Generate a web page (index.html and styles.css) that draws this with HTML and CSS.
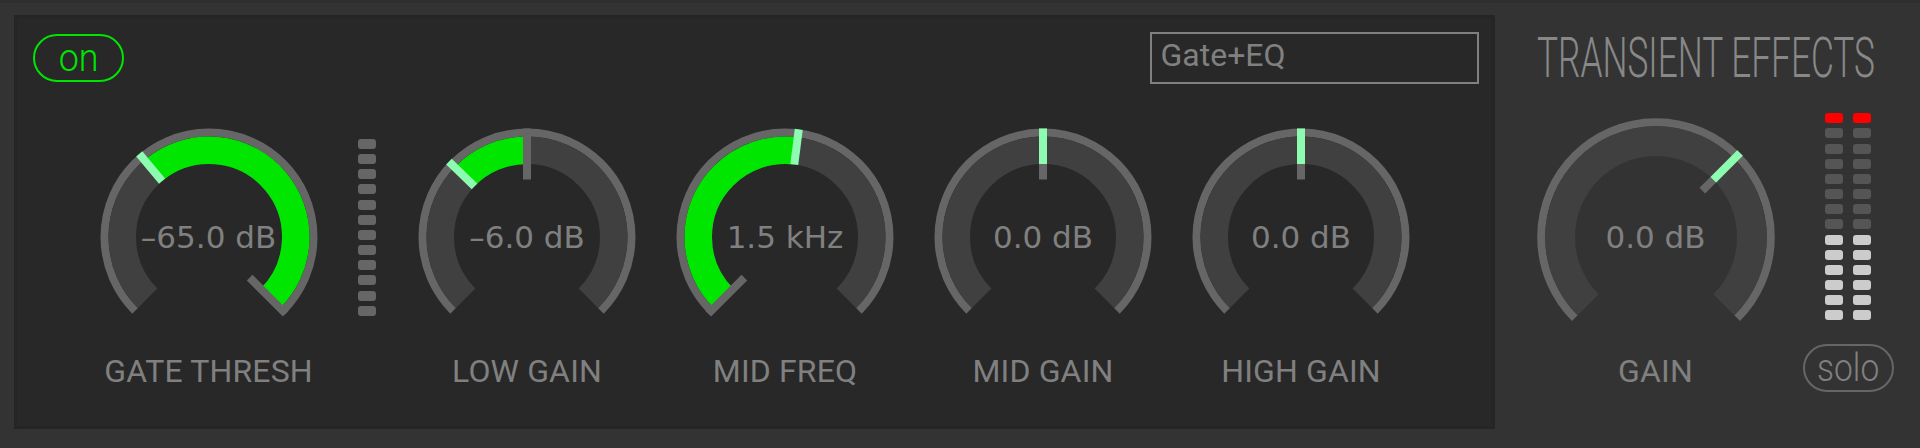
FILE: index.html
```html
<!DOCTYPE html>
<html>
<head>
<meta charset="utf-8">
<title>Transient Effects</title>
<link rel="stylesheet" href="styles.css">
</head>
<body>
<div class="strip">
  <main class="panel">
    <div class="panel-top">
      <button class="pill pill-on"><span class="pill-text">on</span></button>
      <div class="select">Gate+EQ</div>
    </div>
    <div class="knobs">
      <div class="knob-col">
        <div class="knob">
          <svg class="dial" viewBox="-110 -110 220 220">
            <circle class="rim" r="104.5" pathLength="360" stroke-dasharray="270 90" transform="rotate(135)"/>
            <circle class="track" r="86.75" pathLength="360" stroke-dasharray="270 90" transform="rotate(135)"/>
            <circle class="fill" r="86.75" pathLength="360" stroke-dasharray="175 185" transform="rotate(-130)"/>
            <line class="tick" y1="-108.5" y2="-57.5" transform="rotate(135)"/>
            <line class="needle" y1="-108.5" y2="-73" transform="rotate(-40)"/>
          </svg>
          <span class="value">–65.0 dB</span>
        </div>
        <div class="label">GATE THRESH</div>
      </div>
      <div class="meter meter-gate">
        <i></i><i></i><i></i><i></i><i></i><i></i><i></i><i></i><i></i><i></i><i></i><i></i>
      </div>
      <div class="knob-col">
        <div class="knob">
          <svg class="dial" viewBox="-110 -110 220 220">
            <circle class="rim" r="104.5" pathLength="360" stroke-dasharray="270 90" transform="rotate(135)"/>
            <circle class="track" r="86.75" pathLength="360" stroke-dasharray="270 90" transform="rotate(135)"/>
            <circle class="fill" r="86.75" pathLength="360" stroke-dasharray="46 314" transform="rotate(-136)"/>
            <line class="tick" y1="-108.5" y2="-57.5"/>
            <line class="needle" y1="-108.5" y2="-73" transform="rotate(-46)"/>
          </svg>
          <span class="value">–6.0 dB</span>
        </div>
        <div class="label">LOW GAIN</div>
      </div>
      <div class="knob-col">
        <div class="knob">
          <svg class="dial" viewBox="-110 -110 220 220">
            <circle class="rim" r="104.5" pathLength="360" stroke-dasharray="270 90" transform="rotate(135)"/>
            <circle class="track" r="86.75" pathLength="360" stroke-dasharray="270 90" transform="rotate(135)"/>
            <circle class="fill" r="86.75" pathLength="360" stroke-dasharray="142.3 217.7" transform="rotate(135)"/>
            <line class="tick" y1="-108.5" y2="-57.5" transform="rotate(-135)"/>
            <line class="needle" y1="-108.5" y2="-73" transform="rotate(7.3)"/>
          </svg>
          <span class="value">1.5 kHz</span>
        </div>
        <div class="label">MID FREQ</div>
      </div>
      <div class="knob-col">
        <div class="knob">
          <svg class="dial" viewBox="-110 -110 220 220">
            <circle class="rim" r="104.5" pathLength="360" stroke-dasharray="270 90" transform="rotate(135)"/>
            <circle class="track" r="86.75" pathLength="360" stroke-dasharray="270 90" transform="rotate(135)"/>
            <line class="tick" y1="-108.5" y2="-57.5"/>
            <line class="needle" y1="-108.5" y2="-73"/>
          </svg>
          <span class="value">0.0 dB</span>
        </div>
        <div class="label">MID GAIN</div>
      </div>
      <div class="knob-col">
        <div class="knob">
          <svg class="dial" viewBox="-110 -110 220 220">
            <circle class="rim" r="104.5" pathLength="360" stroke-dasharray="270 90" transform="rotate(135)"/>
            <circle class="track" r="86.75" pathLength="360" stroke-dasharray="270 90" transform="rotate(135)"/>
            <line class="tick" y1="-108.5" y2="-57.5"/>
            <line class="needle" y1="-108.5" y2="-73"/>
          </svg>
          <span class="value">0.0 dB</span>
        </div>
        <div class="label">HIGH GAIN</div>
      </div>
    </div>
  </main>
  <aside class="side">
    <h1 class="title">TRANSIENT EFFECTS</h1>
    <div class="side-body">
      <div class="knob-col">
        <div class="knob knob-big">
          <svg class="dial" viewBox="-120 -120 240 240">
            <circle class="rim" r="114.8" pathLength="360" stroke-dasharray="270 90" transform="rotate(135)"/>
            <circle class="track track-big" r="95.9" pathLength="360" stroke-dasharray="270 90" transform="rotate(135)"/>
            <line class="tick" y1="-118.8" y2="-65.5" transform="rotate(45)"/>
            <line class="needle" y1="-118.8" y2="-81" transform="rotate(45)"/>
          </svg>
          <span class="value">0.0 dB</span>
        </div>
        <div class="label label-big">GAIN</div>
      </div>
      <div class="side-right">
        <div class="stereo">
          <div class="meter">
            <i class="red"></i><i class="dim"></i><i class="dim"></i><i class="dim"></i><i class="dim"></i><i class="dim"></i><i class="dim"></i><i class="dim"></i><i class="lit"></i><i class="lit"></i><i class="lit"></i><i class="lit"></i><i class="lit"></i><i class="lit"></i>
          </div>
          <div class="meter">
            <i class="red"></i><i class="dim"></i><i class="dim"></i><i class="dim"></i><i class="dim"></i><i class="dim"></i><i class="dim"></i><i class="dim"></i><i class="lit"></i><i class="lit"></i><i class="lit"></i><i class="lit"></i><i class="lit"></i><i class="lit"></i>
          </div>
        </div>
        <button class="pill pill-solo"><span class="pill-text">solo</span></button>
      </div>
    </div>
  </aside>
</div>
</body>
</html>
```
FILE: styles.css
```css
* { box-sizing: border-box; }
html, body { margin: 0; height: 448px; overflow: hidden; background: #333; }
.strip { display: flex; width: 1920px; height: 448px; padding: 12px 0 19px 14px; border-top: 3px solid #2f2f2f; color: #808080; font-family: Roboto, sans-serif; }
.panel { width: 1481px; height: 414px; background: #282828; border: 3px solid #252525; padding: 16px 13.5px 0 16px; flex: none; }
.panel-top { display: flex; justify-content: space-between; align-items: flex-start; height: 93px; }
.pill { display: flex; align-items: center; justify-content: center; width: 91px; height: 48px; padding: 0; background: transparent; border-radius: 24px; font-family: Roboto, sans-serif; font-weight: 300; font-size: 39px; line-height: 1; }
.pill-text { display: block; transform: scaleX(.86); }
.pill-on { border: 2.5px solid #00e600; color: #00e600; }
.pill-on .pill-text { transform: scaleX(.92); }
.pill-solo { border: 2.5px solid #666; color: #808080; margin-top: 24px; }
.select { width: 329px; height: 52px; margin-top: -2px; border: 2.5px solid #808080; padding: 0 9px; font-size: 32px; line-height: 43px; }
.knobs { display: flex; gap: 38px; padding-left: 65.5px; }
.knob-col { display: flex; flex-direction: column; align-items: center; }
.knob { position: relative; width: 220px; height: 220px; }
.knob-big { width: 240px; height: 240px; }
.dial { display: block; width: 100%; height: 100%; }
.dial circle { fill: none; }
.rim { stroke: #666; stroke-width: 8; }
.track { stroke: #404040; stroke-width: 27.5; }
.track-big { stroke-width: 29.8; }
.fill { stroke: #00e600; stroke-width: 27.5; }
.tick { stroke: #666; stroke-width: 8; }
.needle { stroke: #8dfcb0; stroke-width: 8; }
.value { position: absolute; left: 0; right: 0; top: 50%; transform: translateY(-50%); text-align: center; font-family: "DejaVu Sans", sans-serif; font-size: 31px; line-height: 1; white-space: nowrap; }
.label { margin-top: 6px; font-size: 32px; line-height: 36px; letter-spacing: .15px; white-space: nowrap; }
.label-big { margin-top: -4px; }
.meter { display: flex; flex-direction: column; gap: 5.17px; width: 18px; flex: none; }
.meter i { display: block; height: 10px; border-radius: 3px; background: #666; }
.meter-gate { margin: 12px 3px 0 1.5px; align-self: flex-start; }
.side { flex: 1; min-width: 0; display: flex; flex-direction: column; }
.title { margin: 0 0 16px 42px; height: 86px; font-weight: 300; font-size: 56px; line-height: 86px; color: #888; white-space: nowrap; transform: scaleX(.629); transform-origin: left center; }
.side-body { display: flex; padding-left: 40.5px; }
.side-right { display: flex; flex-direction: column; align-items: center; margin-left: 27px; }
.stereo { display: flex; gap: 10px; margin-top: -3.7px; }
.meter .red { background: #f00; }
.meter .dim { background: #555; }
.meter .lit { background: #ccc; }
```
